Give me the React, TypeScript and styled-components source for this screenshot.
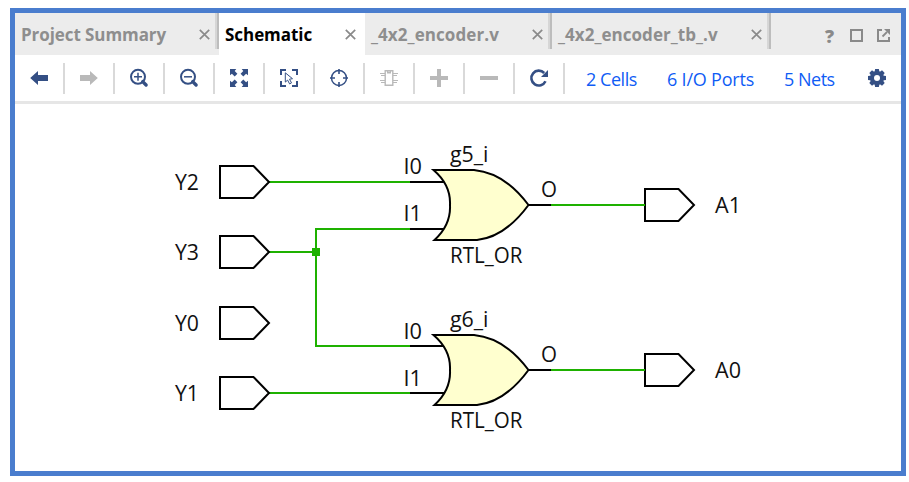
import React from 'react';
import styled, { createGlobalStyle } from 'styled-components';

const NAVY = '#344f84';
const GREY = '#b9b9b9';
const WIRE = '#1eb100';

const GlobalStyle = createGlobalStyle`
  * { box-sizing: border-box; }
  body { margin: 0; background: #fff; font-family: "Open Sans", "Noto Sans", sans-serif; }
`;

const Page = styled.div`
  width: 909px;
  height: 482px;
  padding: 8px 3px 6px 10px;
  overflow: hidden;
`;

const Panel = styled.main`
  display: flex;
  flex-direction: column;
  height: 468px;
  border: 5px solid #4a7dce;
  background: #fff;
`;

const TabBar = styled.div`
  display: flex;
  height: 42px;
  flex: none;
  background: #ececec;
`;

const Tab = styled.div<{ $width: number; $active?: boolean }>`
  display: flex;
  align-items: center;
  justify-content: space-between;
  width: ${p => p.$width}px;
  padding: 0 ${p => (p.$active ? 9 : 5)}px 0 6px;
  background: ${p => (p.$active ? '#fff' : '#ececec')};
  color: ${p => (p.$active ? '#000' : '#8e8e8e')};
`;

const TabLabel = styled.span<{ $spacing: number }>`
  font-size: 17px;
  font-weight: 700;
  line-height: 24px;
  letter-spacing: ${p => p.$spacing}px;
  white-space: nowrap;
  padding-top: 2px;
`;

const TabDivider = styled.div`
  width: 4px;
  height: 36px;
  border-left: 2px solid #d6d6d6;
  border-right: 2px solid #bdbdbd;
`;

const WindowButtons = styled.div`
  display: flex;
  align-items: center;
  gap: 14px;
  margin-left: auto;
  padding: 3px 11px 0 0;
`;

const Help = styled.span`
  width: 13px;
  text-align: center;
  font-size: 18px;
  font-weight: 800;
  line-height: 18px;
  color: #8a8a8a;
`;

const Toolbar = styled.div`
  display: flex;
  align-items: center;
  flex: none;
  height: 49px;
  border-bottom: 3px solid #e6e6e6;
`;

const Tool = styled.div`
  display: flex;
  align-items: center;
  justify-content: center;
  width: 50px;
  height: 31px;
  border-right: 2px solid #d9d9d9;
`;

const Links = styled.div`
  display: flex;
  flex: 1;
  padding-left: 21px;
`;

const Link = styled.a<{ $width: number; $spacing: number }>`
  width: ${p => p.$width}px;
  font-size: 18px;
  line-height: 26px;
  padding-top: 1px;
  letter-spacing: ${p => p.$spacing}px;
  white-space: nowrap;
  color: #0f5cf5;
`;

const Settings = styled.div`
  display: flex;
  padding-right: 15px;
`;

const Icon = styled.svg`
  display: block;
  flex: none;
  overflow: visible;
`;

const Diagram = styled.svg`
  display: block;
  width: 886px;
  height: 367px;
  font-family: "Open Sans", "Noto Sans", sans-serif;
  font-size: 21px;
`;

const Glyph = ({ children }: { children: React.ReactNode }) => (
  <Icon width="18" height="18" viewBox="0 0 18 18" fill="none">{children}</Icon>
);

const Close = () => (
  <Icon width="11" height="11" viewBox="0 0 11 11" stroke="#8a8a8a" strokeWidth="1.7">
    <path d="M.8.8 10.2 10.2M10.2.8.8 10.2" />
  </Icon>
);

const Magnifier = ({ plus }: { plus?: boolean }) => (
  <Glyph>
    <circle cx="8" cy="7.8" r="7" stroke={NAVY} strokeWidth="2" />
    <path d={plus ? 'M4 7.8h8M8 3.8v8' : 'M4 7.8h8'} stroke={NAVY} strokeWidth="1.5" />
    <path d="M12.7 12.6l3.4 3.4" stroke={NAVY} strokeWidth="3.4" strokeLinecap="round" />
  </Glyph>
);

const arrowCorner = 'M0 0h6.3L4.7 1.9 7.4 4.7 4.7 7.4 1.9 4.7 0 6.3z';

const toolIcons = [
  <Glyph><path d="M.2 9 8 2v4h10v6H8v4z" fill={NAVY} /></Glyph>,
  <Glyph><path d="M17.8 9 10 2v4H0v6h10v4z" fill={GREY} /></Glyph>,
  <Magnifier plus />,
  <Magnifier />,
  <Glyph>
    <g fill={NAVY}>
      <path d={arrowCorner} />
      <path d={arrowCorner} transform="translate(18 0) scale(-1 1)" />
      <path d={arrowCorner} transform="translate(0 18) scale(1 -1)" />
      <path d={arrowCorner} transform="translate(18 18) scale(-1 -1)" />
    </g>
  </Glyph>,
  <Glyph>
    <path d="M1 6V1h5M12 1h5v5M17 12v5h-5M6 17H1v-5" stroke={NAVY} strokeWidth="2" />
    <path d="M5.3 3.8v9.3l2.3-2 2 3.8 1.9-1-2-3.7 3-.5z" stroke={NAVY} strokeWidth="1" />
  </Glyph>,
  <Glyph>
    <circle cx="9" cy="9" r="7.5" stroke={NAVY} strokeWidth="1.5" />
    <path d="M9 0v5M9 13v5M0 9h5M13 9h5" stroke={NAVY} strokeWidth="1.6" />
  </Glyph>,
  <Glyph>
    <path d="M5.2 1.7h7.6v14.6H5.2zM7.7 2v1.7h2.6V2" stroke={GREY} strokeWidth="1.4" />
    <path d="M5 4.5H0M5 6.5H1M5 11.5H0M5 13.5H1M13 4.5h5M13 6.5h4M13 11.5h5M13 13.5h4" stroke={GREY} strokeWidth="1" />
  </Glyph>,
  <Glyph><path d="M9 0v18M0 9h18" stroke={GREY} strokeWidth="4" /></Glyph>,
  <Glyph><path d="M0 9h18" stroke={GREY} strokeWidth="4" /></Glyph>,
  <Glyph>
    <path d="M15.5 12.2A7.4 7.4 0 1 1 14.2 4" stroke={NAVY} strokeWidth="2.6" />
    <path d="M18 1v7h-7z" fill={NAVY} />
  </Glyph>,
];

const Gear = () => (
  <Glyph>
    <g fill={NAVY}>
      {[0, 45, 90, 135].map(a => (
        <path key={a} d="M7.1 0h3.8l.7 4v10l-.7 4H7.1l-.7-4V4z" transform={`rotate(${a} 9 9)`} />
      ))}
      <circle cx="9" cy="9" r="7" />
    </g>
    <circle cx="9" cy="9" r="3" fill="#fff" />
  </Glyph>
);

const Label = ({ x, y, w, children }: { x: number; y: number; w: number; children: string }) => (
  <text x={x} y={y} textLength={w} lengthAdjust="spacingAndGlyphs" fill="#111">{children}</text>
);

const Port = ({ x, y }: { x: number; y: number }) => (
  <path d={`M${x} ${y - 16}h33.5l15.5 16-15.5 16h-33.5z`} fill="#fff" stroke="#000" strokeWidth="2" />
);

const Gate = ({ y, name, inputs }: { y: number; name: string; inputs: number[] }) => (
  <g>
    {inputs.map(i => <path key={i} d={`M410 ${i}h34`} stroke="#000" strokeWidth="2" />)}
    <path d={`M528 ${y}h23`} stroke="#000" strokeWidth="2" />
    <path
      d="M433.5-35H474Q505-32 528.5 0Q505 32 477 35H434.5Q451 20 450 0Q451-20 433.5-35z"
      transform={`translate(0 ${y})`}
      fill="#ffffcf"
      stroke="#000"
      strokeWidth="2"
    />
    <Label x={450} y={y - 43.3} w={38.5}>{name}</Label>
    <Label x={403.5} y={y - 31.3} w={18.5}>I0</Label>
    <Label x={403.5} y={y + 15.7} w={18.5}>I1</Label>
    <Label x={541} y={y - 8.2} w={16}>O</Label>
    <Label x={450} y={y + 57.7} w={72.5}>RTL_OR</Label>
  </g>
);

const inputPorts = [
  { name: 'Y2', y: 182 },
  { name: 'Y3', y: 252 },
  { name: 'Y0', y: 323 },
  { name: 'Y1', y: 393 },
];

const outputPorts = [
  { name: 'A1', y: 205 },
  { name: 'A0', y: 370 },
];

export default function App() {
  return (
    <Page>
      <GlobalStyle />
      <Panel>
        <TabBar>
          <Tab $width={200}><TabLabel $spacing={-0.08}>Project Summary</TabLabel><Close /></Tab>
          <TabDivider />
          <Tab $width={146} $active><TabLabel $spacing={-0.05}>Schematic</TabLabel><Close /></Tab>
          <Tab $width={183}><TabLabel $spacing={0.08}>_4x2_encoder.v</TabLabel><Close /></Tab>
          <TabDivider />
          <Tab $width={215}><TabLabel $spacing={0.04}>_4x2_encoder_tb_.v</TabLabel><Close /></Tab>
          <TabDivider />
          <WindowButtons>
            <Help>?</Help>
            <Icon width="13" height="13" viewBox="0 0 13 13" fill="none" stroke="#8a8a8a" strokeWidth="2">
              <path d="M1 1h11v11H1z" />
            </Icon>
            <Icon width="13" height="13" viewBox="0 0 13 13" fill="none" stroke="#8a8a8a" strokeWidth="2">
              <path d="M5 1H1v11h11V8" />
              <path d="M5.5 7.5 10 3" strokeWidth="1.8" />
              <path d="M7 0h6v6z" fill="#8a8a8a" stroke="none" />
            </Icon>
          </WindowButtons>
        </TabBar>
        <Toolbar>
          {toolIcons.map((icon, i) => <Tool key={i}>{icon}</Tool>)}
          <Links>
            <Link $width={81} $spacing={-0.45}>2 Cells</Link>
            <Link $width={117} $spacing={-0.2}>6 I/O Ports</Link>
            <Link $width={55} $spacing={-0.5}>5 Nets</Link>
          </Links>
          <Settings><Gear /></Settings>
        </Toolbar>
        <Diagram viewBox="15 104 886 367">
          <g fill="none" stroke={WIRE} strokeWidth="2">
            <path d="M269 182H410M269 252H316M410 229H316V346H410M269 393H410" />
          </g>
          <path d="M312 248h8v8h-8z" fill={WIRE} />
          {inputPorts.map(p => (
            <g key={p.name}>
              <Port x={220} y={p.y} />
              <Label x={175} y={p.y + 8} w={24}>{p.name}</Label>
            </g>
          ))}
          {outputPorts.map(p => (
            <g key={p.name}>
              <Port x={645} y={p.y} />
              <path d={`M551 ${p.y}H645`} stroke={WIRE} strokeWidth="2" />
              <Label x={715} y={p.y + 8} w={26}>{p.name}</Label>
            </g>
          ))}
          <Gate y={205} name="g5_i" inputs={[182, 229]} />
          <Gate y={370} name="g6_i" inputs={[346, 393]} />
        </Diagram>
      </Panel>
    </Page>
  );
}
